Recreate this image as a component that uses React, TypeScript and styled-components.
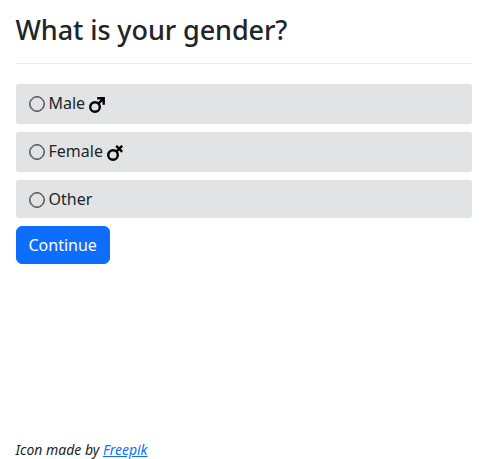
import React from "react";
import styled, { createGlobalStyle } from "styled-components";

const GlobalStyle = createGlobalStyle`
  *, *::before, *::after { box-sizing: border-box; }
  html, body { height: 100%; }
  body {
    margin: 0;
    background: #fff;
    color: #212529;
    font: 400 16px/1.5 "Noto Sans", sans-serif;
  }
  #root { height: 100%; }
`;

const Page = styled.main`
  display: flex;
  flex-direction: column;
  align-items: stretch;
  height: 459px;
  padding: 13px 16px 0;
`;

const Title = styled.h1`
  margin: 0 0 0 -0.5px;
  height: 50px;
  font-size: 27px;
  font-weight: 500;
  line-height: 34px;
  letter-spacing: -0.09px;
`;

const Divider = styled.hr`
  width: 100%;
  height: 1px;
  margin: 0 0 20px;
  border: 0;
  background: #ededee;
`;

const Form = styled.form`
  display: flex;
  flex-direction: column;
  gap: 8px;
`;

const Option = styled.label<{ $height: number }>`
  display: flex;
  align-items: flex-start;
  height: ${(p) => p.$height}px;
  padding: 7px 13px;
  border-radius: 3px;
  background: #e2e3e5;
`;

const Radio = styled.input`
  appearance: none;
  flex: none;
  width: 16px;
  height: 16px;
  margin: 5px 3.5px 0 0;
  border: 1px solid #515254;
  border-radius: 50%;
  box-shadow: inset 0 0 0 0.6px #515254;
  &:checked { border: 5px solid #0d6efd; }
`;

const Symbol = styled.svg`
  flex: none;
  width: 16px;
  height: 16px;
  margin: 6px 0 0 4px;
  fill: none;
  stroke: #000;
  stroke-width: 2.4;
`;

const Continue = styled.button`
  align-self: flex-start;
  width: 94px;
  height: 38px;
  padding: 6px 11.5px;
  border: 1px solid #0d6efd;
  border-radius: 6px;
  background: #0d6efd;
  color: #fff;
  font: inherit;
  text-align: left;
`;

const Credit = styled.footer`
  margin: auto 0 0 -0.5px;
  height: 20px;
  font-size: 14px;
  font-style: italic;
  line-height: 21px;
  a { color: #0d6efd; }
`;

const MaleIcon = () => (
  <Symbol viewBox="0 0 16 16">
    <circle cx="6" cy="10" r="4.8" />
    <path d="M9.3 6.7 14.2 1.8M8.2 1.3h6.5v6.5" />
  </Symbol>
);

const FemaleIcon = () => (
  <Symbol viewBox="0 0 16 16">
    <circle cx="6" cy="10" r="4.8" />
    <path d="M9.3 6.7 15.2 .8M9.2 .8 15.2 6.8" />
  </Symbol>
);

export default function App() {
  return (
    <>
      <GlobalStyle />
      <Page>
        <Title>What is your gender?</Title>
        <Divider />
        <Form onSubmit={(e) => e.preventDefault()}>
          <Option $height={40}><Radio type="radio" name="gender" />Male<MaleIcon /></Option>
          <Option $height={40}><Radio type="radio" name="gender" />Female<FemaleIcon /></Option>
          <Option $height={38}><Radio type="radio" name="gender" />Other</Option>
          <Continue>Continue</Continue>
        </Form>
        <Credit>Icon made by <a href="#">Freepik</a></Credit>
      </Page>
    </>
  );
}
